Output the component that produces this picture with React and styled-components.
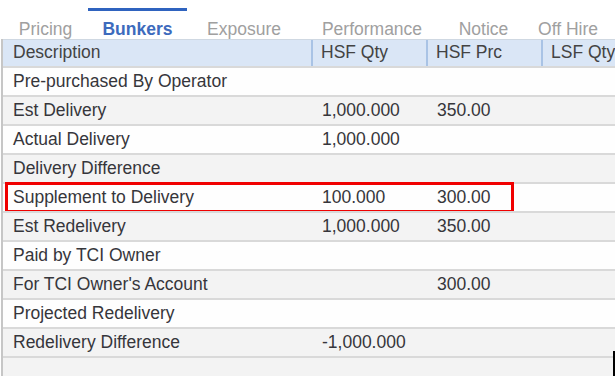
import styled, { createGlobalStyle } from "styled-components";

const GlobalStyle = createGlobalStyle`
  html, body {
    margin: 0;
    padding: 0;
    background: #ffffff;
  }
  body {
    font-family: "Liberation Sans", Arial, sans-serif;
  }
`;

const Page = styled.div`
  position: relative;
  width: 615px;
  height: 376px;
  overflow: hidden;
  display: flex;
  flex-direction: column;
  background: #ffffff;
`;

const TabBar = styled.div`
  display: flex;
  height: 39px;
  flex-shrink: 0;
`;

const Tab = styled.div`
  width: ${(p) => p.$w}px;
  box-sizing: border-box;
  padding-left: ${(p) => p.$shift || 0}px;
  display: flex;
  justify-content: center;
  align-items: flex-end;
  font-size: 17.5px;
  color: ${(p) => (p.$active ? "#3d6bbd" : "#a0a0a0")};
  font-weight: ${(p) => (p.$active ? "bold" : "normal")};
  border-top: 3px solid ${(p) => (p.$active ? "#2f63bf" : "transparent")};
  margin-top: 8px;
  line-height: 20px;
`;

const Grid = styled.div`
  flex: 1;
  display: flex;
  flex-direction: column;
  margin-left: 1px;
  border-left: 2px solid #c6c6c6;
  background: #f3f3f3;
`;

const HeaderRow = styled.div`
  display: grid;
  grid-template-columns: 309px 115px 115px 1fr;
  height: 27px;
  background: #dae6f6;
  border-top: 1px solid #cfd8e2;
  box-sizing: border-box;
`;

const HeadCell = styled.div`
  padding-left: ${(p) => (p.$first ? 10 : 8)}px;
  font-size: 17.5px;
  line-height: 25px;
  color: #434343;
  white-space: nowrap;
  border-left: ${(p) => (p.$first ? "none" : "2px solid #a9c3e5")};
  ${(p) => (p.$first ? "" : "margin-left: -1px;")}
`;

const Row = styled.div`
  position: relative;
  display: grid;
  grid-template-columns: 309px 115px 115px 1fr;
  height: 29px;
  box-sizing: border-box;
  border-top: 2px solid #d9d9d9;
  background: ${(p) => (p.$alt ? "#f3f3f3" : "#fefefe")};
`;

const Cell = styled.div`
  padding-left: 10px;
  font-size: 17.5px;
  line-height: 27px;
  color: #36363b;
  white-space: nowrap;
`;

const Filler = styled.div`
  flex: 1;
  border-top: 2px solid #d9d9d9;
  background: #f3f3f3;
`;

const Highlight = styled.div`
  position: absolute;
  left: 2px;
  top: -2px;
  width: 509px;
  height: 31px;
  box-sizing: border-box;
  border: 3px solid #f00000;
  pointer-events: none;
`;

const EdgeMark = styled.div`
  position: absolute;
  right: 0;
  bottom: 0;
  width: 2px;
  height: 25px;
  background: #000;
`;

const tabs = [
  { label: "Pricing", w: 88, shift: 3 },
  { label: "Bunkers", w: 99, active: true },
  { label: "Exposure", w: 114 },
  { label: "Performance", w: 142 },
  { label: "Notice", w: 81 },
  { label: "Off Hire", w: 88 },
];

const rows = [
  ["Pre-purchased By Operator", "", ""],
  ["Est Delivery", "1,000.000", "350.00"],
  ["Actual Delivery", "1,000.000", ""],
  ["Delivery Difference", "", ""],
  ["Supplement to Delivery", "100.000", "300.00", true],
  ["Est Redelivery", "1,000.000", "350.00"],
  ["Paid by TCI Owner", "", ""],
  ["For TCI Owner's Account", "", "300.00"],
  ["Projected Redelivery", "", ""],
  ["Redelivery Difference", "-1,000.000", ""],
];

export default function App() {
  return (
    <>
      <GlobalStyle />
      <Page>
        <TabBar>
          {tabs.map((t) => (
            <Tab key={t.label} $w={t.w} $shift={t.shift} $active={t.active}>
              {t.label}
            </Tab>
          ))}
        </TabBar>
        <Grid>
          <HeaderRow>
            <HeadCell $first>Description</HeadCell>
            <HeadCell>HSF Qty</HeadCell>
            <HeadCell>HSF Prc</HeadCell>
            <HeadCell>LSF Qty</HeadCell>
          </HeaderRow>
          {rows.map(([desc, qty, prc, marked], i) => (
            <Row key={desc} $alt={i % 2 === 1}>
              <Cell>{desc}</Cell>
              <Cell>{qty}</Cell>
              <Cell>{prc}</Cell>
              <Cell />
              {marked && <Highlight />}
            </Row>
          ))}
          <Filler />
        </Grid>
        <EdgeMark />
      </Page>
    </>
  );
}
